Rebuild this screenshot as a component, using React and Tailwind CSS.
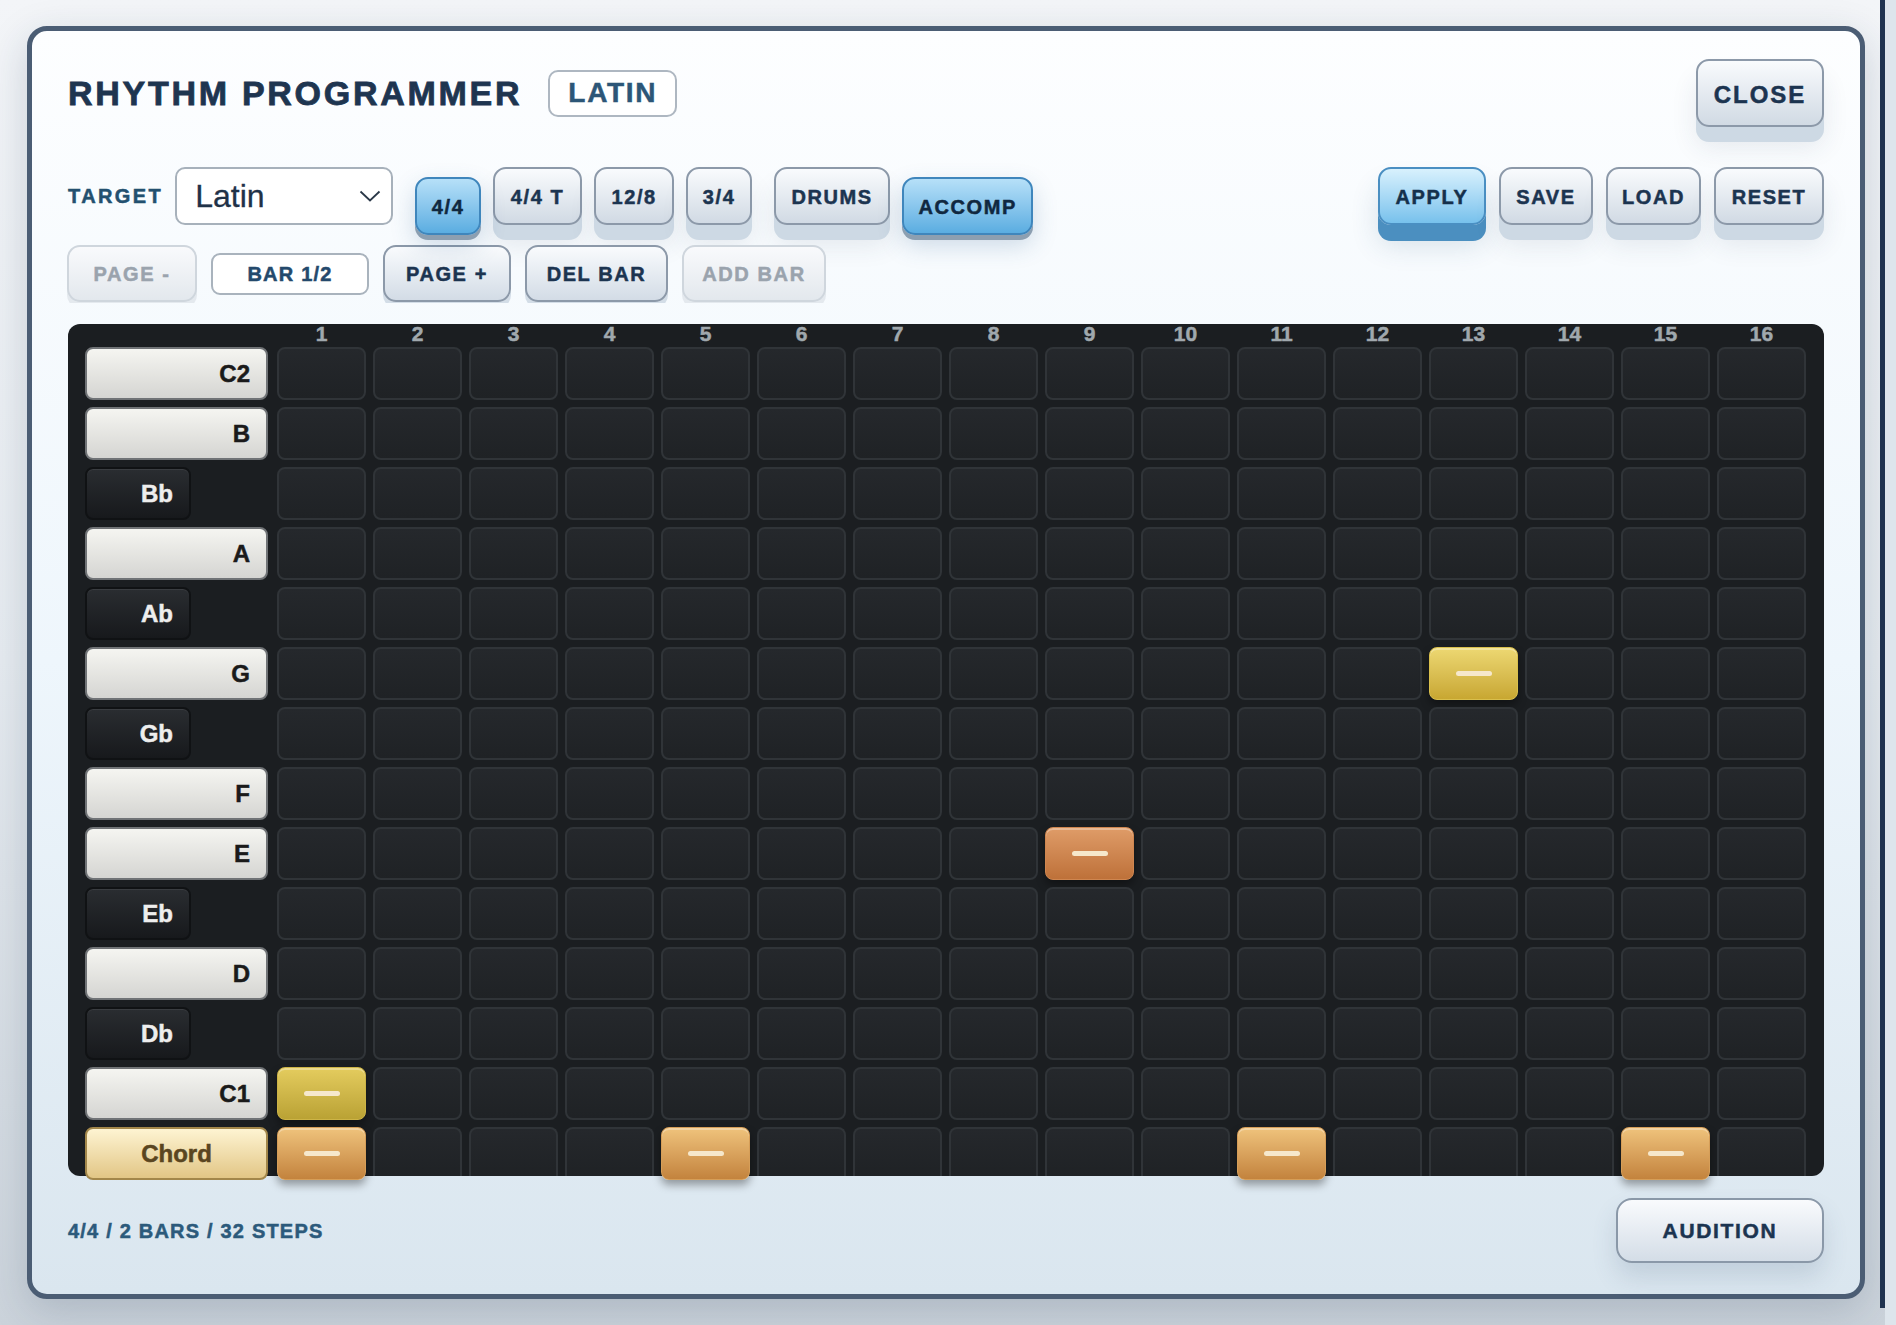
import React from 'react';

const rows = [
  { note: 'C2', kind: 'white' },
  { note: 'B', kind: 'white' },
  { note: 'Bb', kind: 'black' },
  { note: 'A', kind: 'white' },
  { note: 'Ab', kind: 'black' },
  { note: 'G', kind: 'white', on: { 13: 'gold' } },
  { note: 'Gb', kind: 'black' },
  { note: 'F', kind: 'white' },
  { note: 'E', kind: 'white', on: { 9: 'copper' } },
  { note: 'Eb', kind: 'black' },
  { note: 'D', kind: 'white' },
  { note: 'Db', kind: 'black' },
  { note: 'C1', kind: 'white', on: { 1: 'olive' } },
  { note: 'Chord', kind: 'chord', on: { 1: 'amber', 5: 'amber', 11: 'amber', 15: 'amber' } },
];

const steps = Array.from({ length: 16 }, (_, i) => i + 1);

const btnStyles = {
  raised: 'bg-linear-to-b from-[#f9fbfd] to-[#d1dae4] border-2 border-[#8c99a9] text-[#1c3450] shadow-[0_15px_0_#cdd9e4,0_20px_26px_rgba(40,60,90,0.10)]',
  pressed: 'translate-y-[10px] bg-linear-to-b from-[#b6e0f8] to-[#5aade1] border-2 border-[#3f86bc] text-[#102840] shadow-[0_5px_0_#8c9fb1,0_10px_24px_rgba(40,90,140,0.22)]',
  apply: 'bg-linear-to-b from-[#d8f1fd] to-[#77c1ec] border-2 border-[#4a8fc2] text-[#15304b] shadow-[0_16px_0_#4b8fc0,0_20px_28px_rgba(40,80,120,0.16)]',
  flat: 'bg-linear-to-b from-[#f9fbfd] to-[#d3dce6] border-2 border-[#8c99a9] text-[#1c3450] shadow-[0_6px_0_#d3dde7]',
  disabled: 'bg-linear-to-b from-[#f9fafc] to-[#e3e8ed] border-2 border-[#cfd6dd] text-[#9aa3ad] shadow-[0_6px_0_#e4e9ee]',
};

const cellStyles = {
  gold: 'bg-linear-to-b from-[#edd872] to-[#c8a731] border border-[#d9bf4c]',
  olive: 'bg-linear-to-b from-[#e4cc5e] to-[#baa234] border border-[#cdb446]',
  copper: 'bg-linear-to-b from-[#df9c68] to-[#be7139] border border-[#cf8650]',
  amber: 'bg-linear-to-b from-[#efc37c] to-[#c3833d] border border-[#d69e58]',
};

function Btn({ children, w, variant = 'raised', h = 'h-[58px]', text = 'text-[20px]', extra = '' }) {
  return (
    <button className={`${w} ${h} ${text} ${btnStyles[variant]} ${extra} shrink-0 rounded-[13px] font-bold tracking-[0.08em] flex items-center justify-center pt-[1px]`}>
      {children}
    </button>
  );
}

function NoteLabel({ note, kind }) {
  if (kind === 'black') {
    return (
      <div className="w-[106px] h-[53px] rounded-[8px] border-2 border-[#101214] bg-linear-to-b from-[#2a2d31] to-[#17191c] text-[#eeeeee] text-[24px] font-bold flex items-center justify-end pr-[16px] shadow-[inset_0_1px_0_rgba(255,255,255,0.08)]">
        {note}
      </div>
    );
  }
  if (kind === 'chord') {
    return (
      <div className="w-[183px] h-[53px] rounded-[8px] border-2 border-[#a3874a] bg-linear-to-b from-[#fef4d2] to-[#e2c685] text-[#5a4520] text-[24px] font-bold flex items-center justify-center">
        {note}
      </div>
    );
  }
  return (
    <div className="w-[183px] h-[53px] rounded-[8px] border-2 border-[#707376] bg-linear-to-b from-[#f5f5f1] to-[#d5d5d2] text-[#1a1a1a] text-[24px] font-bold flex items-center justify-end pr-[16px]">
      {note}
    </div>
  );
}

function Cell({ tone, last }) {
  if (tone) {
    return (
      <div className={`h-[53px] rounded-[8px] ${cellStyles[tone]} shadow-[0_5px_9px_rgba(0,0,0,0.35),inset_0_2px_0_rgba(255,255,255,0.3)] flex items-center justify-center`}>
        <div className="w-[36px] h-[5px] rounded-full bg-[#f6e8cc]" />
      </div>
    );
  }
  if (last) {
    return <div className="h-[49px] rounded-t-[8px] border-2 border-b-0 border-[#303438] bg-linear-to-b from-[#25282c] to-[#1f2225]" />;
  }
  return <div className="h-[53px] rounded-[8px] border-2 border-[#303438] bg-linear-to-b from-[#25282c] to-[#1f2225]" />;
}

export default function App() {
  return (
    <div className="w-[1896px] h-[1325px] flex overflow-hidden bg-linear-to-b from-[#f3f5f8] via-[#e6ebf0] to-[#cbd3db] font-[family-name:'Liberation_Sans',Arial,sans-serif] [-webkit-text-stroke:0.5px_currentColor]">
      <div className="w-[1880px] shrink-0 pl-[27px] pt-[26px]">
        <div className="w-[1838px] h-[1273px] border-[5px] border-[#4b5d74] rounded-[20px] bg-linear-to-b from-[#fdfeff] via-[#eef6fc] to-[#dae6ef] shadow-[0_12px_40px_rgba(30,50,80,0.18)] flex flex-col pl-[36px] pr-[36px] pt-[28px]">
          {/* header */}
          <div className="h-[68px] flex items-start justify-between">
            <div className="h-[68px] flex items-center">
              <h1 className="text-[34px] font-bold tracking-[0.08em] text-[#1e3550] leading-none [-webkit-text-stroke:0.8px_currentColor]">RHYTHM PROGRAMMER</h1>
              <div className="ml-[26px] w-[129px] h-[47px] rounded-[10px] border-2 border-[#aeb7c1] bg-white flex items-center justify-center text-[28px] font-bold tracking-[0.06em] text-[#2c5677]">
                LATIN
              </div>
            </div>
            <Btn w="w-[128px]" h="h-[68px]" text="text-[24px]" extra="pt-[4px]">CLOSE</Btn>
          </div>

          {/* controls */}
          <div className="mt-[40px] h-[58px] flex items-start justify-between">
            <div className="flex items-start">
              <div className="h-[58px] flex items-center text-[20px] font-bold tracking-[0.12em] text-[#23506f]">TARGET</div>
              <div className="ml-[12px] w-[218px] h-[58px] rounded-[10px] border-2 border-[#a7b1bb] bg-white flex items-center justify-between pl-[18px] pr-[10px]">
                <span className="text-[32px] text-[#1f3248] [-webkit-text-stroke:0.3px_currentColor]">Latin</span>
                <svg width="22" height="12" viewBox="0 0 22 12" fill="none" stroke="#2a3848" strokeWidth="1.8">
                  <polyline points="1.5,1.5 11,10.5 20.5,1.5" />
                </svg>
              </div>
              <div className="ml-[22px] flex items-start gap-[12px]">
                <Btn w="w-[66px]" variant="pressed">4/4</Btn>
                <Btn w="w-[89px]">4/4 T</Btn>
                <Btn w="w-[80px]">12/8</Btn>
                <Btn w="w-[66px]">3/4</Btn>
                <Btn w="w-[116px]" extra="ml-[10px]">DRUMS</Btn>
                <Btn w="w-[131px]" variant="pressed">ACCOMP</Btn>
              </div>
            </div>
            <div className="flex items-start gap-[13px]">
              <Btn w="w-[108px]" variant="apply">APPLY</Btn>
              <Btn w="w-[94px]">SAVE</Btn>
              <Btn w="w-[95px]">LOAD</Btn>
              <Btn w="w-[110px]">RESET</Btn>
            </div>
          </div>

          {/* paging */}
          <div className="mt-[20px] h-[58px] overflow-hidden flex items-start gap-[14px] -ml-[1px]">
            <Btn w="w-[130px]" h="h-[57px]" variant="disabled">PAGE -</Btn>
            <div className="self-center w-[158px] h-[42px] rounded-[9px] border-2 border-[#a9b3bd] bg-white flex items-center justify-center text-[20px] font-bold tracking-[0.06em] text-[#24496c]">
              BAR 1/2
            </div>
            <Btn w="w-[128px]" h="h-[57px]" variant="flat">PAGE +</Btn>
            <Btn w="w-[143px]" h="h-[57px]" variant="flat">DEL BAR</Btn>
            <Btn w="w-[144px]" h="h-[57px]" variant="disabled">ADD BAR</Btn>
          </div>

          {/* grid */}
          <div className="mt-[21px] h-[852px] shrink-0 rounded-[12px] bg-[#1b1e21] pl-[17px]">
            <div className="h-[23px] grid grid-cols-[185px_repeat(16,89px)] gap-x-[7px]">
              <div />
              {steps.map((s) => (
                <div key={s} className="text-center text-[21px] font-bold leading-none text-[#a0a8ad] -mt-[1px]">{s}</div>
              ))}
            </div>
            <div className="flex flex-col gap-[7px]">
              {rows.map((r, ri) => (
                <div key={r.note} className="grid grid-cols-[185px_repeat(16,89px)] gap-x-[7px] items-start">
                  <NoteLabel note={r.note} kind={r.kind} />
                  {steps.map((s) => (
                    <Cell key={s} tone={r.on ? r.on[s] : undefined} last={ri === rows.length - 1} />
                  ))}
                </div>
              ))}
            </div>
          </div>

          {/* footer */}
          <div className="mt-[22px] flex items-center justify-between">
            <div className="text-[20px] font-bold tracking-[0.06em] text-[#2c5a7b]">4/4 / 2 BARS / 32 STEPS</div>
            <button className="w-[208px] h-[65px] rounded-[16px] border-2 border-[#8a98a8] bg-linear-to-b from-[#f9fbfd] to-[#d4dde7] text-[21px] font-bold tracking-[0.08em] text-[#1b3450] shadow-[0_14px_24px_rgba(60,90,120,0.16)] flex items-center justify-center">
              AUDITION
            </button>
          </div>
        </div>
      </div>
      <div className="w-[5px] h-[1308px] shrink-0 bg-[#1f3350]" />
      <div className="flex-1 h-full bg-[#dde5ec]" />
    </div>
  );
}
